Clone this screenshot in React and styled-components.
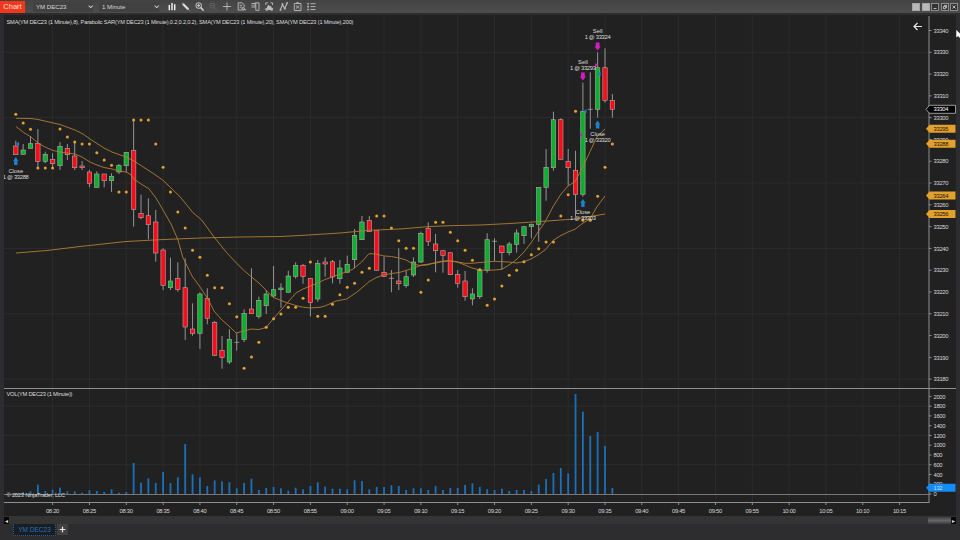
import React from 'react'
import styled, { createGlobalStyle } from 'styled-components'
import { FaChevronDown } from 'react-icons/fa'

// first bar is 08:15, one bar per minute
const barX = (i) => 15.8 + i * 7.365
const priceY = (price) => 30.5 + (33340 - price) * 2.179
const volumeY = (vol) => 494 - vol * 0.0488

// [high, bodyTop, bodyBottom, low, type] g = up, r = down, d = doji
const candles = [
  [140.7, 146, 154.7, 154.7, 'r'], [144, 150, 154.3, 154.3, 'g'], [136, 143.7, 148.3, 148.3, 'g'],
  [129, 143.3, 161.3, 168, 'r'], [151.7, 154.3, 161.3, 163.3, 'g'], [153.3, 159.3, 163.7, 167, 'r'],
  [142, 146.3, 165.7, 170, 'g'], [144, 148.3, 154.7, 160, 'r'], [141.7, 156, 167.7, 170, 'r'],
  [161, 166, 167.7, 170, 'r'], [170, 172, 183.3, 187.3, 'r'], [171.3, 174, 187.3, 187.3, 'g'],
  [174, 174, 180.7, 187.3, 'r'], [173.3, 176.3, 180.7, 192, 'g'], [164, 165.3, 172, 174, 'g'],
  [152.3, 152.3, 165.7, 172, 'g'], [120, 150.3, 209.3, 226.7, 'r'], [194.7, 213.3, 217.7, 219.3, 'r'],
  [198.3, 215.7, 224.7, 239.3, 'r'], [210, 222, 253, 261.7, 'r'], [248.3, 250, 285.5, 290, 'r'],
  [257.7, 281, 287.7, 290, 'g'], [262.3, 278.3, 289.7, 291.7, 'r'], [258.3, 287.7, 327, 340, 'r'],
  [303.3, 329, 333.3, 335.7, 'r'], [292.3, 294, 333.3, 349, 'g'], [288.3, 298.3, 318.3, 324.3, 'r'],
  [321, 322.3, 355.3, 356, 'r'], [336, 350.3, 357.7, 368.7, 'r'], [329.3, 339.3, 362, 364, 'g'],
  [333.3, 342.3, 342.3, 350.7, 'd'], [309.3, 313.3, 339.7, 342, 'g'], [268.3, 309, 313.7, 313.7, 'r'],
  [296.7, 300.3, 316.3, 318.7, 'g'], [290, 294, 305.7, 314, 'g'], [266, 289.7, 296, 297.3, 'g'],
  [283.3, 288, 289.7, 307.7, 'g'], [270.7, 276, 292.3, 292.3, 'g'], [262.3, 265.3, 276.3, 278.7, 'g'],
  [264, 265.3, 276.7, 283.7, 'r'], [278.3, 278.3, 302.7, 316.5, 'r'], [260, 263.3, 299, 301.7, 'g'],
  [257.3, 262, 264, 276.7, 'r'], [260, 261.7, 277, 283.3, 'r'], [260, 268, 278.7, 283.7, 'g'],
  [255.7, 264.3, 272.3, 272.3, 'g'], [229, 235.3, 259.7, 268.3, 'g'], [216, 222, 239.7, 239.7, 'g'],
  [216, 220.3, 231.7, 231.7, 'r'], [230.7, 230.7, 270.3, 270.3, 'r'], [256.7, 272.3, 276.7, 276.7, 'r'],
  [270, 278.3, 278.3, 292.3, 'd'], [248.3, 281, 283.7, 290, 'r'], [270.7, 276.7, 285.7, 287.7, 'g'],
  [257.3, 262, 275, 277, 'g'], [231.7, 233.3, 262, 263, 'g'], [222.3, 228.3, 241.3, 246, 'r'],
  [234, 244, 250.7, 272.3, 'r'], [250.7, 250.7, 255.3, 272.7, 'r'], [252.7, 252.7, 274.7, 274.7, 'r'],
  [270, 274.5, 283.3, 287.7, 'r'], [271, 281, 296.7, 300.7, 'r'], [288.3, 294, 299, 305.3, 'g'],
  [268, 270, 296.7, 299, 'g'], [233.3, 239.7, 270.3, 272.7, 'g'], [238.3, 241.3, 241.3, 261, 'd'],
  [246, 246, 252.7, 269.3, 'r'], [242, 244, 252.7, 255.3, 'g'], [229.3, 233, 244.3, 252.7, 'g'],
  [226.7, 226.7, 235.7, 244, 'g'], [223.5, 224.3, 226.7, 238.3, 'g'], [187.3, 187.3, 224.3, 241.7, 'g'],
  [149, 167.3, 187.3, 200.7, 'g'], [111.7, 119.7, 167.7, 170.7, 'g'], [118.3, 119.7, 159.3, 159.3, 'r'],
  [149, 161.3, 167.7, 185.7, 'r'], [150.7, 170.3, 194.3, 216.7, 'r'], [82.7, 111.3, 194.3, 196.7, 'g'],
  [72.3, 109.3, 109.3, 128.7, 'd'], [52.3, 67.7, 109.3, 117.7, 'g'], [48.3, 67.7, 100.3, 102.7, 'r'],
  [94, 100.3, 109.3, 117.7, 'r'],
]

// parabolic SAR, one dot per bar
const sar = [
  114.3, 123, 129.3, 168, 168, 168, 129, 137, 142, 144, 144, 152.7, 160, 165.3, 192, 192, 120, 120, 120,
  144, 167.3, 192, 212, 228, 250.3, 257.3, 275.3, 287.7, 287.7, 303.7, 316.7, 368.3, 357, 342.3, 327.3,
  318.7, 314, 307.3, 307.3, 298.3, 262, 316.3, 316.3, 304.3, 294.7, 287.3, 283.3, 272.3, 268.3, 216, 216,
  228, 240.7, 248.3, 248.3, 292.3, 280, 222.3, 222.3, 232.3, 240.7, 250.3, 260.3, 269.7, 305.3, 299, 286,
  275.3, 270.3, 261.7, 254.7, 248.7, 242, 242, 216, 194.7, 111.3, 220.3, 220.3, 196.3, 167.3, 144,
]

const averages = [
  // fast
  '16,126.5 23,132 31,137 38,143 45,147 53,150.5 60,152 67,153 75,154 82,157 90,162 97,165 104,167.5 112,169 119,171 126,172 130,174 134,179 141,184 148.7,188.5 156,198 163,210 171,224 178,240 182.7,257 192,276 200,287 208,299 214,311 222,320 230,327 236,333 244,331 251,329 259,329.5 266,327.5 274,318 281,310 288,302 296,293 303,289 310,286.3 317.7,283 325,279.5 332,277 340,274 346.7,272 353,269 361.7,262 369,253.7 376,254 384,256 391.7,256.5 399,258 406,260 413,264 420,265.5 427,265 435,262.5 442.7,261 450,260.5 457,262 465,265 472,268 480,270 487,270.3 494,270 502,269.3 509,265 516,260 524,252 531,243 538,232 545,222 553,206.7 561,194 568,186 575,181.7 583,166.7 590,151.7 597,136.7 605,129',
  // medium
  '16,118.3 31,118.5 38,119.5 60,124.5 75,130 83,134 90,139 104,148 112,152 119,154.5 126,157 134,161 153,173.3 162.7,180 180,196.7 193,212.7 201.7,220 213.3,236 226.7,252.7 236.7,263.3 243.3,270 260,284 273,297.3 286.7,302.7 300,306.7 310,308 320,307.3 325,306 336,301 346.7,299 356.7,292.3 369,281.7 376,277.7 384,274.7 400,272.3 413,268.3 421.7,265 435,263.3 442,261.7 450,261 458,262 465,263.3 472,263.3 480,262.5 494,261.3 509,262 516,263 524,261.7 531,259 538,255 545,250 553,240.5 560,236 568,232 575,229.3 583,223 590,219 597,206.7 605,196',
  // slow
  '16,253 47,250.5 80,246.5 126,241.5 160,239.7 200,238 240,237 280,236.5 300,235.5 340,233 369,230.3 400,229 430,226.5 450,225.7 480,225 510,223.5 540,221.5 575,219 605,214',
]

// y of the top of every volume bar
const volumeTops = [
  493, 492, 491.3, 484.7, 491, 489.7, 487.7, 491.3, 491.3, 492.7, 490.3, 491, 492, 489.3, 492.7, 492, 463,
  482.7, 478.3, 483, 472, 483, 477.3, 444, 474.3, 477.3, 486, 480.3, 481.3, 482.3, 488.3, 483, 478.7, 490,
  488, 487, 488.3, 490.7, 487.7, 489.3, 486, 482.3, 486.7, 488.7, 488.7, 489.3, 480.3, 481, 489.3, 487,
  487, 485.3, 486, 490, 488.3, 488.3, 490, 486, 490, 488, 488, 485, 483.3, 487, 489.3, 490, 488.7, 491,
  490, 490, 491, 484.7, 479, 473, 468, 473.3, 394, 411.7, 436, 432, 446, 488,
]

const times = Array.from({ length: 24 }, (_, k) => {
  const minutes = 8 * 60 + 20 + k * 5
  const h = String(Math.floor(minutes / 60)).padStart(2, '0')
  return { x: barX(5 + k * 5), label: `${h}:${String(minutes % 60).padStart(2, '0')}` }
})

const prices = Array.from({ length: 17 }, (_, k) => 33340 - k * 10)
const volumes = [2000, 1800, 1600, 1400, 1200, 1000, 800, 600, 400, 200, 0]

const orders = [
  { i: 0, kind: 'Close', text: '1 @ 33288', arrow: 157, label: 172.5 },
  { i: 77, kind: 'Sell', text: '1 @ 33293', arrow: 72.5, label: 63.5 },
  { i: 79, kind: 'Sell', text: '1 @ 33324', arrow: 42.5, label: 33 },
  { i: 79, kind: 'Close', text: '1 @ 33320', arrow: 120.5, label: 135.5 },
  { i: 77, kind: 'Close', text: '1 @ 33303', arrow: 199, label: 213.8 },
]

// small arrows at the executed price
const fills = [
  { x: 15.5, y: 144, dir: 1, color: '#1c80d0' },
  { x: 583, y: 111.3, dir: 1, color: '#1c80d0' },
  { x: 597, y: 73.8, dir: 1, color: '#1c80d0' },
  { x: 583, y: 135, dir: -1, color: '#d31bc7' },
  { x: 598, y: 65, dir: -1, color: '#d31bc7' },
]

const PriceTag = ({ y, text, fill, stroke, color }) => (
  <g>
    <path d={`M926 ${y} L929.5 ${y - 4} H955.5 V${y + 4} H929.5 Z`} fill={fill} stroke={stroke} strokeWidth="0.8" />
    <AxisText x="933.5" y={y + 2.1} $color={color} textLength={text.length * 3}>{text}</AxisText>
  </g>
)

const Order = ({ i, kind, text, arrow, label }) => {
  const x = barX(i)
  const path = kind === 'Sell'
    ? `M${x - 1.9} ${arrow} h3.8 v4 h1.2 l-3.1 4 l-3.1 -4 h1.2 z`
    : `M${x - 1.7} ${arrow + 8} h3.4 v-4 h1 l-2.7 -4 l-2.7 4 h1 z`
  return (
    <g>
      <path d={path} fill={kind === 'Sell' ? '#d31bc7' : '#1c80d0'} />
      <OrderText x={x} y={label}>{kind}</OrderText>
      <OrderText x={x} y={label + 6} textLength="26">{text}</OrderText>
    </g>
  )
}

const PriceChart = () => (
  <Plot viewBox="4 15 952 373" width="952" height="373">
    {times.map(({ x, label }) => <GridLine key={label} x1={x} x2={x} y1="15" y2="388" />)}
    {prices.filter((p) => p % 30 === 0).map((p) => (
      <GridLine key={p} x1="4" x2="929" y1={priceY(p)} y2={priceY(p)} />
    ))}
    {candles.map(([high, top, bottom, low, type], i) => {
      const x = barX(i)
      return <g key={i}>
        <line x1={x} x2={x} y1={high} y2={low} stroke="#a2a2a2" strokeWidth="0.9" />
        {type === 'd'
          ? <line x1={x - 2.5} x2={x + 2.5} y1={top} y2={top} stroke="#a2a2a2" strokeWidth="0.8" />
          : <rect
            x={x - 2.2} y={top} width="4.4" height={bottom - top}
            fill={type === 'g' ? '#0cb030' : '#fd0b1b'} stroke="#b3aaa4" strokeWidth="0.6"
          />}
      </g>
    })}
    {averages.map((points) => (
      <polyline key={points} points={points} fill="none" stroke="#b07d36" strokeWidth="0.9" />
    ))}
    {sar.map((y, i) => <circle key={i} cx={barX(i)} cy={y} r="1.5" fill="#e3a132" />)}
    {fills.map(({ x, y, dir, color }, i) => (
      <path key={i} d={dir > 0 ? `M${x + 3.5} ${y - 2.3} v4.6 l-3.2 -2.3 z` : `M${x - 3} ${y - 2} v4 l3 -2 z`} fill={color} />
    ))}
    {orders.map((order) => <Order key={order.text} {...order} />)}
    <Caption x="6.5" y="23.5" textLength="347">
      SMA(YM DEC23 (1 Minute),8), Parabolic SAR(YM DEC23 (1 Minute),0.2,0.2,0.2), SMA(YM DEC23 (1 Minute),20), SMA(YM DEC23 (1 Minute),200)
    </Caption>
    <path d="M922 26.5 H914 M917.5 23 L914 26.5 L917.5 30" fill="none" stroke="#e6e6e6" strokeWidth="1.2" />
    <AxisLine x1="929" x2="929" y1="16" y2="388" />
    {prices.map((p) => (
      <g key={p}>
        <AxisLine x1="929" x2="931.5" y1={priceY(p)} y2={priceY(p)} />
        <AxisText x="933.5" y={priceY(p) + 2.2} textLength="15">{p}</AxisText>
      </g>
    ))}
    <PriceTag y={109.3} text="33304" fill="#000" stroke="#bbb" color="#fff" />
    <PriceTag y={128.7} text="33295" fill="#e2a02d" color="#1c1405" />
    <PriceTag y={143.8} text="33288" fill="#e2a02d" color="#1c1405" />
    <PriceTag y={195.5} text="33264" fill="#e2a02d" color="#1c1405" />
    <PriceTag y={214} text="33256" fill="#e2a02d" color="#1c1405" />
  </Plot>
)

const VolumeChart = () => (
  <Plot viewBox="4 388 952 128" width="952" height="128">
    {times.map(({ x, label }) => <GridLine key={label} x1={x} x2={x} y1="388" y2="502" />)}
    {[600, 1200, 1800].map((v) => <GridLine key={v} x1="4" x2="929" y1={volumeY(v)} y2={volumeY(v)} />)}
    {volumeTops.map((top, i) => (
      <rect key={i} x={barX(i) - 0.9} y={top} width="1.8" height={494 - top} fill="#1b70ba" />
    ))}
    <AxisLine x1="4" x2="956" y1="388.5" y2="388.5" />
    <line x1="4" x2="929" y1="494.5" y2="494.5" stroke="#777" />
    <Caption x="6.5" y="396.2" textLength="66">VOL(YM DEC23 (1 Minute))</Caption>
    <Caption x="6.5" y="497.2" textLength="58.5">© 2023 NinjaTrader, LLC</Caption>
    <AxisLine x1="929" x2="929" y1="389" y2="502.5" />
    {volumes.map((v) => (
      <g key={v}>
        <AxisLine x1="929" x2="931.5" y1={volumeY(v)} y2={volumeY(v)} />
        <AxisText x="933.5" y={volumeY(v) + 2.2} textLength={String(v).length * 3}>{v}</AxisText>
      </g>
    ))}
    <PriceTag y={487.8} text="132" fill="#148cf5" color="#b9dcff" />
    <AxisLine x1="4" x2="929.5" y1="502.5" y2="502.5" />
    {times.map(({ x, label }) => (
      <g key={label}>
        <AxisLine x1={x} x2={x} y1="502" y2="505" />
        <AxisText x={x - 6.7} y="513.1" textLength="13.4">{label}</AxisText>
      </g>
    ))}
  </Plot>
)

const ToolIcons = () => (
  <Tools viewBox="164 0 156 13" width="156" height="13">
    <g fill="none" stroke="#bdbdbd" strokeWidth="0.9">
      <path d="M169.3 5 v5.3 M172 3 v7.3 M174.7 4.3 v6" stroke="#ededed" strokeWidth="1.5" />
      <path d="M183 4 L188.2 9.3" strokeWidth="2.2" stroke="#dedede" />
      <path d="M182 2.8 l1.2 1.2 M188 9 l1.4 1.4" />
      <circle cx="198.7" cy="5.6" r="2.8" stroke="#ddd" />
      <path d="M200.7 7.6 L203.5 10.6" stroke="#ddd" strokeWidth="1.4" />
      <path d="M197.2 5.6 h3 M198.7 4.1 v3" stroke="#ddd" />
      <g stroke="#666">
        <circle cx="212.3" cy="5.6" r="2.5" />
        <path d="M211 5.6 h2.6 M214.3 7.6 l2.5 2.7" />
      </g>
      <path d="M227 2.5 v8 M223 6.5 h8" />
      <path d="M244 10 h-5.8 V2.8 h4 l2 2 v2 M239.7 5.3 h2.5 M239.7 7.2 h2 M241.5 8.5 l2 -1.5 l2 3 z" />
      <path d="M251.5 3.5 h3.5 v3.5 h-3.5 M255 2.8 h4 v7.5 h-3.2 v-7.5 M251.5 5.2 h2" />
      <path d="M265.8 5 V2.8 h2 M270.5 2.8 h2 v2.2 M272.5 8 v2.2 h-2 M267.8 10.2 h-2 V8" />
      <path d="M266.5 9.5 l2 -4.5 l1 2 l1 -1 l1.5 3.5 z" fill="#bdbdbd" />
      <path d="M280.5 9.8 L282.5 4.5 L284.7 8.5 L287 3.3" strokeWidth="1.1" />
      <path d="M279.6 10 h1.7 M281.6 4 h1.7 M283.9 8.7 h1.7 M286.3 3 h1.7" strokeWidth="1.5" />
      <path d="M294.3 3.5 h6.7 v7 h-6.7 z M296.3 2.7 h2.6 M296 5.5 l3.3 3 M299.3 5.5 l-3.3 3" />
      <path d="M307.3 3.7 h1.6 M307.3 6.6 h1.6 M307.3 9.5 h1.6" strokeWidth="1.6" />
      <path d="M310.5 3.7 h5 M310.5 6.6 h5 M310.5 9.5 h5" />
    </g>
  </Tools>
)

const App = () => {
  return <Window>
    <GlobalStyle />
    <Toolbar>
      <Title>Chart</Title>
      <Select $width="60px">YM DEC23<FaChevronDown /></Select>
      <Select $width="60px">1 Minute<FaChevronDown /></Select>
      <ToolIcons />
      <WindowButtons>
        <LinkBox />
        <LinkBox />
        <WindowButton viewBox="0 0 8 8"><path d="M2 6 h4" /></WindowButton>
        <WindowButton viewBox="0 0 8 8"><path d="M3.2 3 V1.8 h3 v3 H5 M1.8 3.3 h3 v3 h-3 z" /></WindowButton>
        <WindowButton viewBox="0 0 8 8"><path d="M2 2 l4 4 M6 2 l-4 4" /></WindowButton>
      </WindowButtons>
    </Toolbar>
    <ChartArea>
      <PriceChart />
      <VolumeChart />
    </ChartArea>
    <ScrollBar>
      <ScrollArrow>◂</ScrollArrow>
      <Thumb />
      <ScrollArrow>▸</ScrollArrow>
    </ScrollBar>
    <Tabs>
      <Tab>YM DEC23</Tab>
      <AddTab viewBox="0 0 11 11"><path d="M5.5 2.7 v5.6 M2.7 5.5 h5.6" /></AddTab>
    </Tabs>
    <Pointer viewBox="0 0 4 9"><path d="M0.3 0 V7.6 L2 6 L4 8 V3.5 Z" fill="#fff" /></Pointer>
  </Window>
}

const GlobalStyle = createGlobalStyle`
  * {
    box-sizing: border-box;
  }
  body {
    margin: 0;
    overflow: hidden;
    background: #2d2d2f;
    font-family: "Liberation Sans", Arial, sans-serif;
  }
`

const Window = styled.main`
  position: relative;
  display: flex;
  flex-direction: column;
  width: 960px;
  height: 540px;
  background: #2d2d2f;
`

const Toolbar = styled.header`
  display: flex;
  align-items: center;
  height: 13px;
  flex: none;
  background: linear-gradient(#434343, #4d4d4d);
`

const Title = styled.div`
  width: 25px;
  height: 12px;
  margin-right: 8px;
  background: #f5361a;
  color: #ffe3dc;
  font-size: 7.5px;
  line-height: 12px;
  text-align: center;
`

const Select = styled.div`
  display: flex;
  align-items: center;
  justify-content: space-between;
  width: ${(props) => props.$width};
  height: 10px;
  padding: 0 0 0 3px;
  margin-right: 6px;
  background: #414141;
  color: #d6d6d6;
  font-size: 6.1px;
  line-height: 9px;
  white-space: nowrap;
  svg {
    width: 5.5px;
    height: 5.5px;
    color: #e6e6e6;
  }
`

const Tools = styled.svg`
  display: block;
  flex: none;
  margin-left: -1px;
`

const WindowButtons = styled.div`
  display: flex;
  align-items: center;
  gap: 1.5px;
  margin-left: auto;
  padding-right: 2px;
`

const LinkBox = styled.span`
  width: 8px;
  height: 8px;
  background: #b9b9b9;
  border: 1px solid #a5a5a5;
`

const WindowButton = styled.svg`
  width: 8px;
  height: 8px;
  border: 0.5px solid #8c8c8c;
  background: #333;
  path {
    fill: none;
    stroke: #e4e4e4;
    stroke-width: 1;
  }
`

const ChartArea = styled.section`
  display: flex;
  flex-direction: column;
  margin: 2px 4px 0;
  background: #212121;
`

const Plot = styled.svg`
  display: block;
  flex: none;
`

const GridLine = styled.line`
  stroke: #2c2c2c;
  stroke-width: 1;
`

const AxisLine = styled.line`
  stroke: #8f8f8f;
  stroke-width: 1;
`

const AxisText = styled.text`
  fill: ${(props) => props.$color || '#d8d8d8'};
  font-size: 5.8px;
`

const Caption = styled.text`
  fill: #dcdcdc;
  font-size: 5.7px;
`

const OrderText = styled.text`
  fill: #dedede;
  font-size: 5.8px;
  text-anchor: middle;
`

const ScrollBar = styled.div`
  display: flex;
  align-items: center;
  height: 8px;
  margin: 0 4px;
  background: #343434;
`

const ScrollArrow = styled.span`
  width: 5px;
  height: 7px;
  background: #080808;
  color: #ddd;
  font: 6px/7px "DejaVu Sans", sans-serif;
  text-align: center;
`

const Thumb = styled.div`
  width: 23px;
  height: 7px;
  margin-left: auto;
  background: linear-gradient(#3c3c3c, #666, #3c3c3c);
`

const Tabs = styled.nav`
  display: flex;
  align-items: flex-start;
  height: 13px;
  padding-left: 13px;
`

const Tab = styled.div`
  width: 43px;
  height: 12px;
  background: #1b1d20;
  border: 1px dotted #1a64a6;
  border-top-color: transparent;
  color: #1b74c2;
  font-size: 6.5px;
  line-height: 10px;
  text-align: center;
`

const AddTab = styled.svg`
  width: 11px;
  height: 11px;
  margin-left: 1px;
  background: #414141;
  path {
    fill: none;
    stroke: #eee;
    stroke-width: 1.2;
  }
`

// mouse pointer lying over the right window edge
const Pointer = styled.svg`
  position: absolute;
  top: 30px;
  right: 0;
  width: 4px;
  height: 9px;
`

export default App
